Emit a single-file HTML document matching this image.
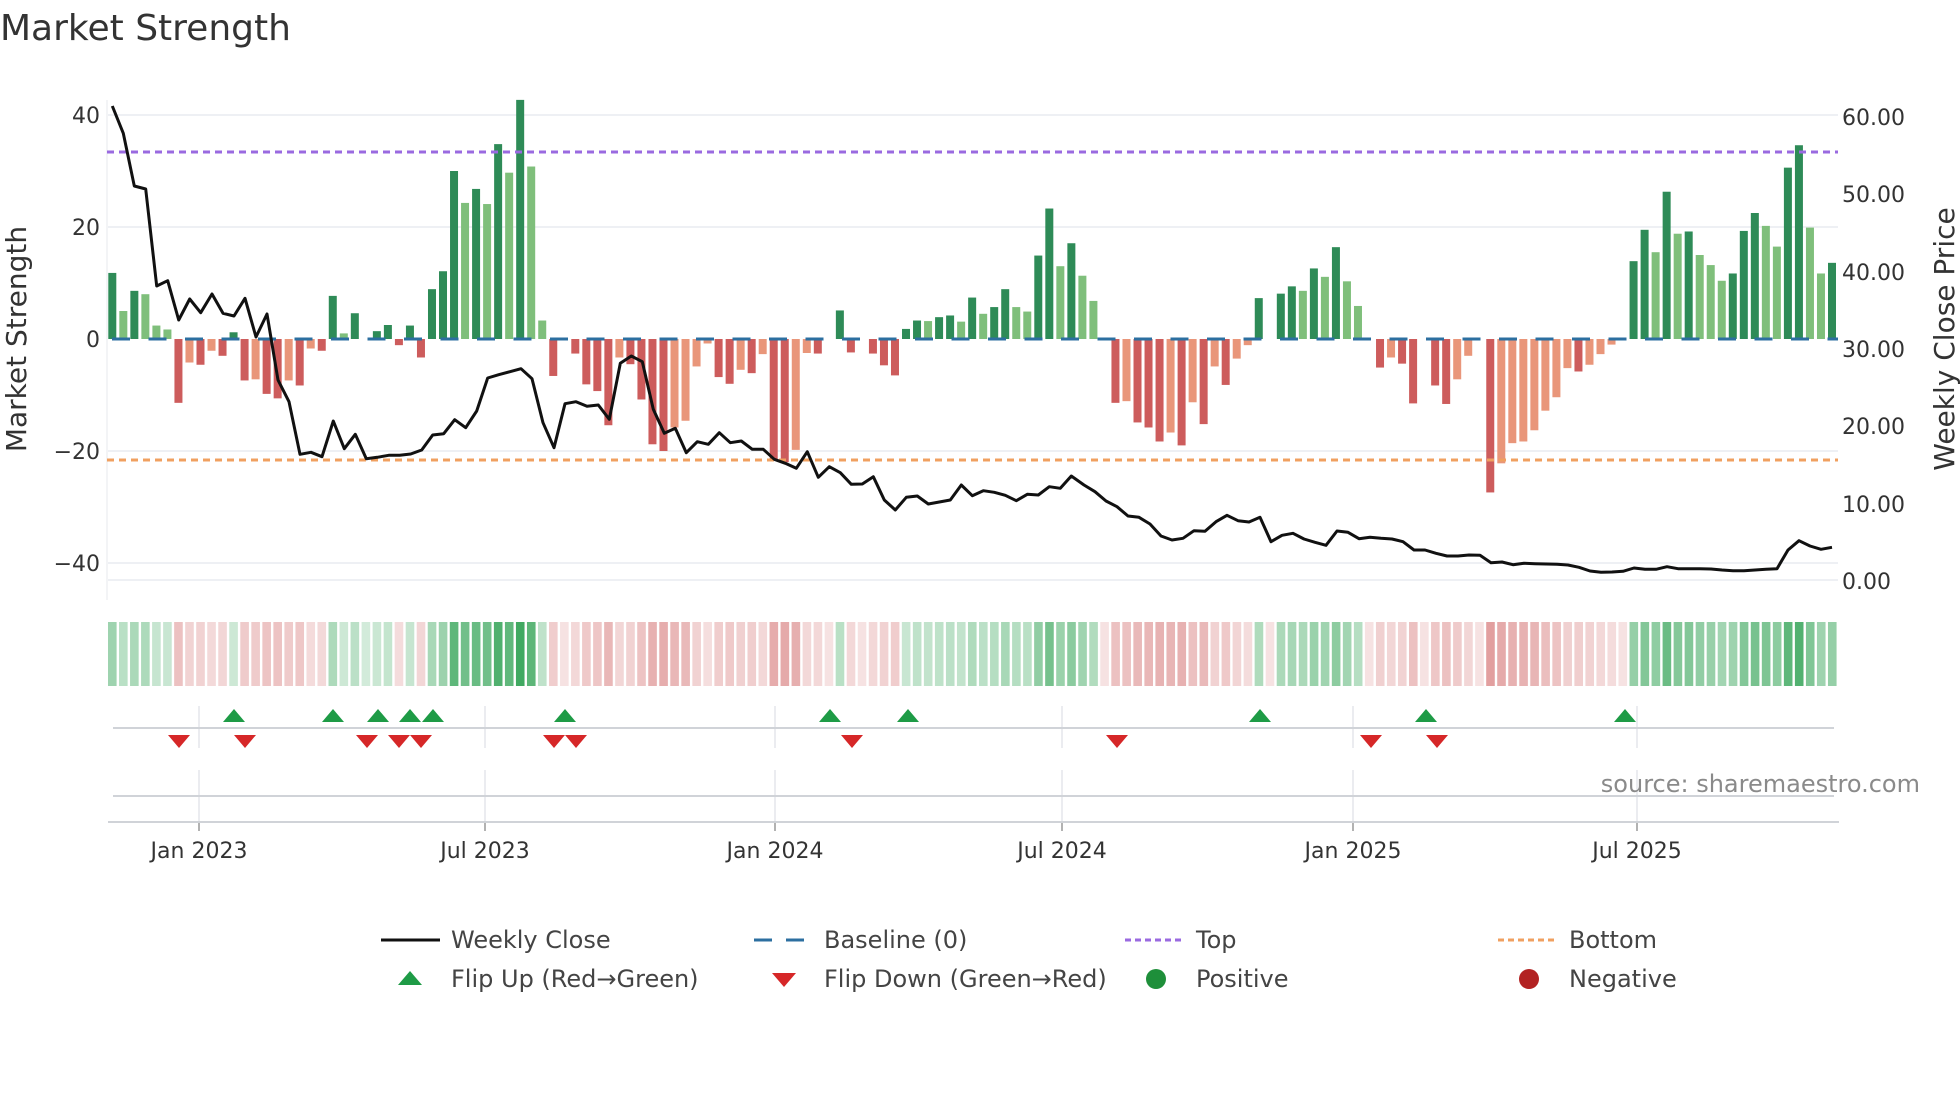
<!DOCTYPE html>
<html><head><meta charset="utf-8">
<style>
html,body{margin:0;padding:0;background:#fff;}
body{width:1960px;height:1102px;overflow:hidden;font-family:"DejaVu Sans","Liberation Sans",sans-serif;}
svg text{font-family:"DejaVu Sans","Liberation Sans",sans-serif;}
</style></head><body>
<svg id="s" width="1960" height="1102" xmlns="http://www.w3.org/2000/svg">
<text x="0" y="40" font-size="36" fill="#333">Market Strength</text>
<g id="grid" stroke="#eef0f4" stroke-width="2">
<line x1="107" y1="115" x2="1838" y2="115"/>
<line x1="107" y1="227" x2="1838" y2="227"/>
<line x1="107" y1="451" x2="1838" y2="451"/>
<line x1="107" y1="563" x2="1838" y2="563"/>
<line x1="107" y1="580" x2="1838" y2="580"/>
<line x1="107" y1="100" x2="107" y2="600" stroke="#f3f4f6"/>
</g>
<g font-size="22" fill="#333" text-anchor="end">
<text x="100" y="123">40</text><text x="100" y="235">20</text><text x="100" y="347">0</text>
<text x="100" y="459">−20</text><text x="100" y="571">−40</text>
</g>
<g font-size="22" fill="#333">
<text x="1842" y="125">60.00</text><text x="1842" y="202">50.00</text><text x="1842" y="280">40.00</text>
<text x="1842" y="357">30.00</text><text x="1842" y="434">20.00</text><text x="1842" y="512">10.00</text>
<text x="1842" y="589">0.00</text>
</g>
<text transform="translate(26 339) rotate(-90)" font-size="28" fill="#333" text-anchor="middle">Market Strength</text>
<text transform="translate(1954 339) rotate(-90)" font-size="28" fill="#333" text-anchor="middle">Weekly Close Price</text>
<g id="bars"></g>
<line x1="112" y1="339" x2="1838" y2="339" stroke="#2c6fa0" stroke-width="3" stroke-dasharray="18 18.5"/>
<line x1="107" y1="152" x2="1838" y2="152" stroke="#9a6ae0" stroke-width="3" stroke-dasharray="7 5"/>
<line x1="107" y1="460" x2="1838" y2="460" stroke="#f0a060" stroke-width="3" stroke-dasharray="7 5"/>
<polyline id="price" fill="none" stroke="#111" stroke-width="3" stroke-linejoin="round"/>
<g id="heat"></g>
<g stroke="#e4e6ea" stroke-width="1.5" id="vg"></g>
<line x1="113" y1="728" x2="1834" y2="728" stroke="#d0d3d8" stroke-width="2"/>
<line x1="113" y1="796" x2="1834" y2="796" stroke="#d0d3d8" stroke-width="2"/>
<line x1="108" y1="822" x2="1839" y2="822" stroke="#d0d3d8" stroke-width="2"/>
<g id="flips"></g>
<g font-size="22" fill="#333" text-anchor="middle">
<text x="199" y="858">Jan 2023</text><text x="485" y="858">Jul 2023</text><text x="775" y="858">Jan 2024</text>
<text x="1062" y="858">Jul 2024</text><text x="1353" y="858">Jan 2025</text><text x="1637" y="858">Jul 2025</text>
</g>
<text x="1920" y="792" font-size="24" fill="#8a8a8a" text-anchor="end">source: sharemaestro.com</text>
<g font-size="24" fill="#444">
<line x1="381" y1="940" x2="440" y2="940" stroke="#111" stroke-width="3"/>
<text x="451" y="948">Weekly Close</text>
<line x1="754" y1="940" x2="806" y2="940" stroke="#2c6fa0" stroke-width="3" stroke-dasharray="18 14"/>
<text x="824" y="948">Baseline (0)</text>
<line x1="1125" y1="940" x2="1181" y2="940" stroke="#9a6ae0" stroke-width="3" stroke-dasharray="6 4"/>
<text x="1196" y="948">Top</text>
<line x1="1498" y1="940" x2="1554" y2="940" stroke="#f0a060" stroke-width="3" stroke-dasharray="6 4"/>
<text x="1569" y="948">Bottom</text>
<polygon points="398,985 422,985 410,971" fill="#1e9b46"/>
<text x="451" y="987">Flip Up (Red→Green)</text>
<polygon points="772,973 796,973 784,987" fill="#d62728"/>
<text x="824" y="987">Flip Down (Green→Red)</text>
<circle cx="1156" cy="979" r="10" fill="#1e8f3a"/>
<text x="1196" y="987">Positive</text>
<circle cx="1529" cy="979" r="10" fill="#b22222"/>
<text x="1569" y="987">Negative</text>
</g>
</svg>
<script>
var NS="http://www.w3.org/2000/svg";
function el(t,a,p){var e=document.createElementNS(NS,t);for(var k in a)e.setAttribute(k,a[k]);p.appendChild(e);return e;}
var v=[11.8,5,8.6,8,2.4,1.7,-11.4,-4.2,-4.6,-2.1,-3,1.2,-7.4,-7.2,-9.8,-10.6,-7.4,-8.3,-1.7,-2.1,7.7,1,4.6,0.1,1.4,2.5,-1.1,2.4,-3.3,8.9,12.1,30,24.3,26.8,24.1,34.8,29.7,42.7,30.8,3.3,-6.6,0,-2.6,-8.1,-9.3,-15.4,-3.3,-4.5,-10.8,-18.8,-20,-15.8,-14.6,-4.9,-0.8,-6.8,-8,-5.5,-6.1,-2.7,-21.5,-22,-19.8,-2.5,-2.6,0,5.1,-2.4,0,-2.6,-4.7,-6.5,1.8,3.3,3.2,3.9,4.2,3.1,7.4,4.5,5.7,8.9,5.7,4.9,14.9,23.3,13,17.1,11.3,6.8,0,-11.4,-11.1,-14.9,-15.8,-18.3,-16.7,-19,-11.3,-15.2,-4.9,-8.2,-3.5,-1.1,7.3,0,8.1,9.4,8.6,12.6,11.1,16.4,10.3,5.9,0,-5.1,-3.3,-4.4,-11.5,0,-8.3,-11.6,-7.2,-3,0,-27.4,-22.2,-18.6,-18.3,-16.3,-12.8,-10.4,-5.2,-5.8,-4.6,-2.7,-1,0,13.9,19.5,15.5,26.3,18.8,19.2,15,13.2,10.4,11.7,19.3,22.5,20.2,16.5,30.6,34.6,19.9,11.7,13.6];
var c="DLDLLLRSRSRDRSRRSRSRDLDZDDRDRDDDLDLDLDLLRZRRRRSRRRRSSSSRRSRSRRSSRZDRZRRRDDLDDLDLDDLLDDLDLLZRSRRRSRSRSRSSDZDDLDLDLLZRSRRZRRSSZRSSSSSSSRSSSZDDLDLDLLLDDDLLDDLLD";
var col={D:"#2e8b57",L:"#7fbf7b",R:"#cd5c5c",S:"#e9967a",Z:"#fff"};
var bars=document.getElementById("bars"),heat=document.getElementById("heat");
var step=(1832-112.3)/156;
for(var i=0;i<v.length;i++){
 var x=112.3+i*step,h=Math.abs(v[i])*5.6,ch=c[i]||"D";
 if(h>0.5&&ch!="Z")el("rect",{x:x-4,y:v[i]>0?339-h:339,width:8,height:h,fill:col[ch]},bars);
 var t=Math.pow(Math.min(Math.abs(v[i])/40,1),0.8),f;
 if(v[i]>0.05)f="rgba(44,160,80,"+(0.2+0.7*t).toFixed(2)+")";else f="rgba(205,92,92,"+(0.18+0.55*t).toFixed(2)+")";
 el("rect",{x:108+i*(1839-108)/157,y:622,width:8.6,height:64,fill:f},heat);
}
var Z=[[100,[37,48,70,130,103,288,137,297,170,588,203,572,236,690,269,627,302,668,336,612,369,670,402,678,435,625,468,741,501,672,534,870,567,935,600,1093,633,1087,666,1100,700,993,733,1076,766,1033,799,1106,832,1102,866,1096,899,1096,932,1092,965,1080,998,1035,1031,1031,1064,989,1097,1013,1130,963,1163,864,1196,854,1230,845,1263,836,1296,866,1329,998,1362,1073,1395,941,1428,935,1461,949]],
[590,[25,945,58,988,91,820,124,798,157,815,190,958,223,1030,256,1015,289,1088,322,1055,355,1063,388,1028,421,1058,454,1053,487,1078,520,1078,553,1108,586,1120,619,1135,652,1085,685,1162,718,1130,751,1148,784,1183,817,1182,850,1160,883,1230,916,1260,949,1222,982,1218,1015,1242,1048,1236,1081,1230,1114,1185,1147,1217,1180,1202,1213,1207,1246,1216,1279,1232,1312,1213,1345,1215,1378,1190,1411,1195,1444,1158]],
[1080,[12,1185,45,1205,78,1233,111,1250,144,1278,177,1282,210,1302,243,1338,276,1350,309,1345,342,1322,375,1324,408,1295,441,1276,474,1292,507,1296,540,1282,573,1355,606,1336,639,1330,672,1347,705,1357,738,1366,771,1323,804,1327,837,1346,870,1342,903,1345,936,1347,969,1355,1002,1380,1035,1380,1068,1390,1101,1398,1134,1398,1167,1395,1200,1396,1233,1418,1266,1416,1299,1424]],
[1520,[12,1420,45,1421,78,1422,111,1423,144,1425,177,1432,210,1443,243,1447,276,1446,309,1444,342,1434,375,1438,408,1438,441,1430,474,1436,507,1436,540,1436,573,1437,606,1440,639,1442,672,1442,705,1440,738,1438,771,1436,804,1380,837,1352,870,1368,903,1378,936,1372]]];
var pts=[];Z.forEach(function(z){for(var k=0;k<z[1].length;k+=2)pts.push((z[0]+z[1][k]/3).toFixed(1)+","+(90+z[1][k+1]/3).toFixed(1));});
document.getElementById("price").setAttribute("points",pts.join(" "));
var vg=document.getElementById("vg");
[199,485,775,1062,1353,1637].forEach(function(x){el("line",{x1:x,y1:706,x2:x,y2:748},vg);el("line",{x1:x,y1:770,x2:x,y2:822},vg);el("line",{x1:x,y1:822,x2:x,y2:831,stroke:"#999"},vg);});
var fl=document.getElementById("flips");
[234,333,378,410,433,565,830,908,1260,1426,1625].forEach(function(x){el("polygon",{points:(x-11)+",722 "+(x+11)+",722 "+x+",709",fill:"#1e9b46"},fl);});
[179,245,367,399,421,554,576,852,1117,1371,1437].forEach(function(x){el("polygon",{points:(x-11)+",735 "+(x+11)+",735 "+x+",748",fill:"#d62728"},fl);});
</script>
</body></html>
